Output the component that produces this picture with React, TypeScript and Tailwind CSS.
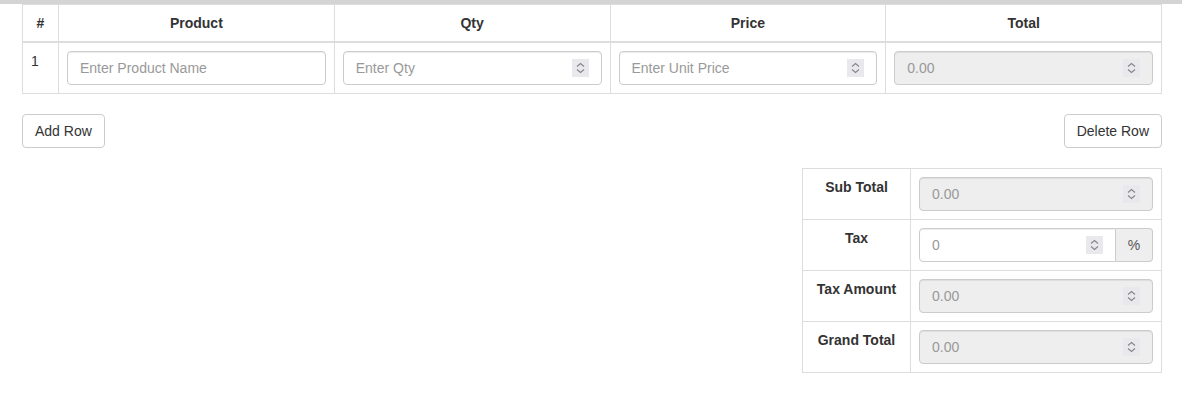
import React, { useState } from "react";

const font = { fontFamily: '"Liberation Sans", Arial, sans-serif' };

function Spinner() {
  return (
    <span className="pointer-events-none absolute right-[13px] top-1/2 -translate-y-1/2 w-[17px] h-[18px] bg-[#e9e9ed] flex items-center justify-center">
      <svg width="17" height="18" viewBox="0 0 17 18" fill="none">
        <path d="M5 7.5 L8.5 4.5 L12 7.5" stroke="#858585" strokeWidth="1.1" />
        <path d="M5 10.5 L8.5 13.5 L12 10.5" stroke="#858585" strokeWidth="1.1" />
      </svg>
    </span>
  );
}

function NumInput({
  placeholder,
  disabled,
  rounded = "rounded",
}: {
  placeholder: string;
  disabled?: boolean;
  rounded?: string;
}) {
  return (
    <div className="relative w-full">
      <input
        type="number"
        disabled={disabled}
        placeholder={placeholder}
        className={`block w-full h-[34px] px-3 py-1.5 text-[14px] text-[#555] border border-[#ccc] ${rounded} shadow-[inset_0_1px_1px_rgba(0,0,0,0.075)] placeholder:text-[#999] outline-none [appearance:textfield] [&::-webkit-inner-spin-button]:appearance-none [&::-webkit-outer-spin-button]:appearance-none ${
          disabled ? "bg-[#eee]" : "bg-white"
        }`}
      />
      <Spinner />
    </div>
  );
}

function TextInput({ placeholder }: { placeholder: string }) {
  return (
    <input
      type="text"
      placeholder={placeholder}
      className="block w-full h-[34px] px-3 py-1.5 text-[14px] text-[#555] border border-[#ccc] rounded bg-white shadow-[inset_0_1px_1px_rgba(0,0,0,0.075)] placeholder:text-[#999] outline-none"
    />
  );
}

export default function App() {
  const [rows, setRows] = useState([1]);

  return (
    <div className="min-h-[412px] bg-white text-[#333] text-[14px] leading-[20px]" style={font}>
      <div className="h-[4px] bg-[#d4d4d4]" />
      <div className="ml-[22px] w-[1140px]">
        <table className="w-full table-fixed border-collapse border border-[#ddd] border-t-0 mb-5">
          <colgroup>
            <col className="w-[36px]" />
            <col />
            <col />
            <col />
            <col />
          </colgroup>
          <thead>
            <tr>
              <th className="border border-[#ddd] border-b-2 p-2 text-center font-bold">#</th>
              <th className="border border-[#ddd] border-b-2 p-2 text-center font-bold">Product</th>
              <th className="border border-[#ddd] border-b-2 p-2 text-center font-bold">Qty</th>
              <th className="border border-[#ddd] border-b-2 p-2 text-center font-bold">Price</th>
              <th className="border border-[#ddd] border-b-2 p-2 text-center font-bold">Total</th>
            </tr>
          </thead>
          <tbody>
            {rows.map((n) => (
              <tr key={n}>
                <td className="border border-[#ddd] p-2 align-top">{n}</td>
                <td className="border border-[#ddd] p-2 align-top">
                  <TextInput placeholder="Enter Product Name" />
                </td>
                <td className="border border-[#ddd] p-2 align-top">
                  <NumInput placeholder="Enter Qty" />
                </td>
                <td className="border border-[#ddd] p-2 align-top">
                  <NumInput placeholder="Enter Unit Price" />
                </td>
                <td className="border border-[#ddd] p-2 align-top">
                  <NumInput placeholder="0.00" disabled />
                </td>
              </tr>
            ))}
          </tbody>
        </table>

        <div className="flex justify-between mb-5">
          <button
            onClick={() => setRows([...rows, rows.length + 1])}
            className="h-[34px] px-3 border border-[#ccc] rounded bg-white text-[#333] text-[14px]"
          >
            Add Row
          </button>
          <button
            onClick={() => rows.length > 1 && setRows(rows.slice(0, -1))}
            className="h-[34px] px-3 border border-[#ccc] rounded bg-white text-[#333] text-[14px]"
          >
            Delete Row
          </button>
        </div>

        <table className="ml-auto w-[360px] table-fixed border-collapse border border-[#ddd]">
          <colgroup>
            <col className="w-[108px]" />
            <col />
          </colgroup>
          <tbody>
            <tr>
              <th className="border border-[#ddd] p-2 align-top text-center font-bold">Sub Total</th>
              <td className="border border-[#ddd] p-2 align-top">
                <NumInput placeholder="0.00" disabled />
              </td>
            </tr>
            <tr>
              <th className="border border-[#ddd] p-2 align-top text-center font-bold">Tax</th>
              <td className="border border-[#ddd] p-2 align-top">
                <div className="flex">
                  <NumInput placeholder="0" rounded="rounded-l" />
                  <span className="w-[37px] shrink-0 h-[34px] flex items-center justify-center border border-l-0 border-[#ccc] rounded-r bg-[#eee] text-[#555]">
                    %
                  </span>
                </div>
              </td>
            </tr>
            <tr>
              <th className="border border-[#ddd] p-2 align-top text-center font-bold">Tax Amount</th>
              <td className="border border-[#ddd] p-2 align-top">
                <NumInput placeholder="0.00" disabled />
              </td>
            </tr>
            <tr>
              <th className="border border-[#ddd] p-2 align-top text-center font-bold">Grand Total</th>
              <td className="border border-[#ddd] p-2 align-top">
                <NumInput placeholder="0.00" disabled />
              </td>
            </tr>
          </tbody>
        </table>
      </div>
    </div>
  );
}
